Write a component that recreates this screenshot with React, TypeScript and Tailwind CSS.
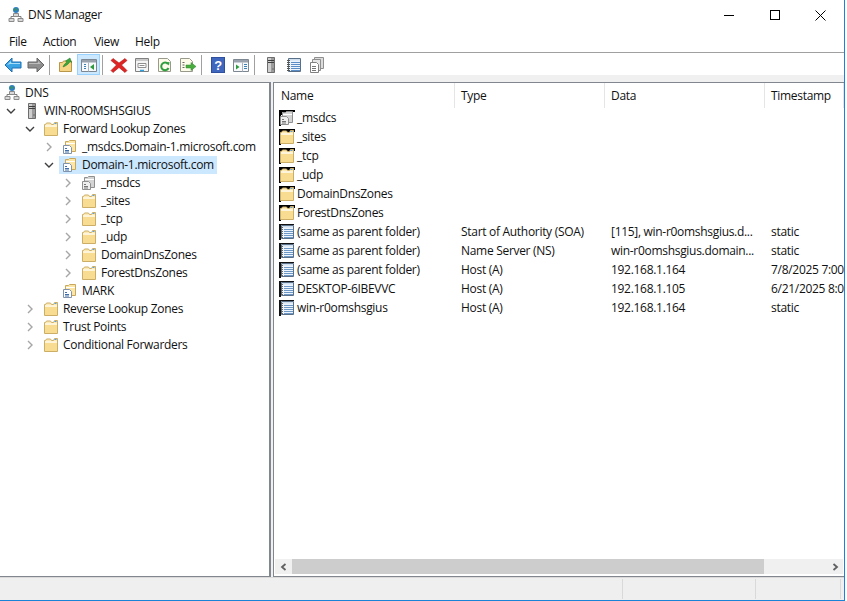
const font = "font-['Open_Sans',sans-serif] text-[12px] tracking-[-0.3px] text-[#111111]"

const FolderIcon = ({ shadow }: { shadow?: boolean }) => (
  <svg width="16" height="16" viewBox="0 0 16 16" className="shrink-0">
    {shadow && <path d="M0 0h16v3H2v13H0z" fill="#000" />}
    <path d="M1.500 14.500V3.500h1l1-1.500h4l1 1.500h2l1-2h3v13z" fill="#fbeab6" stroke="#cdae66" />
    <path d="M2 5h12" stroke="#fff" />
    <path d="M2 6h12v8H2z" fill="#f8dc92" />
    <path d="M11.500 2.500h2" stroke="#5aa0e0" />
  </svg>
)

const ZoneIcon = ({ gray, shadow }: { gray?: boolean; shadow?: boolean }) => {
  const line = gray ? '#8f8f8f' : '#c8a85e'
  const fill = gray ? '#d4d4d4' : '#fbe6a8'
  const ink = gray ? '#777' : '#3d6fae'
  return (
    <svg width="16" height="16" viewBox="0 0 16 16" className="shrink-0">
      {shadow && <path d="M0 0h16v2H3v3H2v11H0z" fill="#000" />}
      <path d="M3.500 12.500V2.500h3l1-1h6v11z" fill={fill} stroke={line} />
      <path d="M4 4.500h9" stroke="#fff" />
      <path d="M1.500 6.500h6l2 2v6h-8z" fill={gray ? '#efefef' : '#fff'} stroke={gray ? '#8f8f8f' : '#7f93ad'} />
      <path d="M3 9.500h2M3 11.500h4M3 13h4" stroke={ink} />
    </svg>
  )
}

const ServerIcon = ({ w = 16 }: { w?: number }) => (
  <svg width={w} height="16" viewBox="0 0 16 16" className="shrink-0">
    <path d="M4.500 0.500h7v15h-7z" fill="#9c9c9c" stroke="#6d6d6d" />
    <path d="M5 1h3v14H5z" fill="#cfcfcf" />
    <path d="M5 3.500h6M5 5.500h6" stroke="#3f3f3f" />
    <path d="M9.500 12h1" stroke="#3f3f3f" />
  </svg>
)

const DnsIcon = () => (
  <svg width="16" height="16" viewBox="0 0 16 16" className="shrink-0">
    <circle cx="8" cy="3" r="3" fill="#2f7fc0" />
    <path d="M6.500 1.500l2 0 .5 1.500-2 1z" fill="#3d9b3d" />
    <path d="M8 6v3M3 11V9.500h10V11" fill="none" stroke="#7d7d7d" />
    <path d="M5.500 6.500h5v3h-5zM1 11.500h5v3H1zM10 11.500h5v3h-5z" fill="#d9d9d9" stroke="#8a8a8a" />
  </svg>
)

const RecordIcon = () => (
  <svg width="16" height="16" viewBox="0 0 16 16" className="shrink-0">
    <path d="M0 0h2v16H0zM0 0h15v1H0z" fill="#111" />
    <path d="M2.500 1.500h12v13h-12z" fill="#eef4fb" stroke="#5a6f88" />
    <path d="M3 2h11v1.500H3z" fill="#cfdff0" />
    <path d="M5 5.500h9M5 7.500h9M5 9.500h9M5 11.500h9M5 13.500h9" stroke="#6d97c4" />
    <path d="M2 3.500h2M2 5.500h2M2 7.500h2M2 9.500h2M2 11.500h2M2 13.500h2" stroke="#666" />
  </svg>
)

const Chevron = ({ open }: { open?: boolean }) => (
  <svg width="10" height="10" viewBox="0 0 10 10" className="shrink-0">
    {open ? (
      <path d="M1 3l4 4 4-4" fill="none" stroke="#3f3f3f" strokeWidth="1.400" />
    ) : (
      <path d="M3 1l4 4-4 4" fill="none" stroke="#a6a6a6" strokeWidth="1.400" />
    )}
  </svg>
)

const treeRows = [
  { level: 1, open: true, icon: 'server', label: 'WIN-R0OMSHSGIUS' },
  { level: 2, open: true, icon: 'folder', label: 'Forward Lookup Zones' },
  { level: 3, icon: 'zone', label: '_msdcs.Domain-1.microsoft.com' },
  { level: 3, open: true, icon: 'zone', label: 'Domain-1.microsoft.com', selected: true },
  { level: 4, icon: 'gray', label: '_msdcs' },
  { level: 4, icon: 'folder', label: '_sites' },
  { level: 4, icon: 'folder', label: '_tcp' },
  { level: 4, icon: 'folder', label: '_udp' },
  { level: 4, icon: 'folder', label: 'DomainDnsZones' },
  { level: 4, icon: 'folder', label: 'ForestDnsZones' },
  { level: 3, leaf: true, icon: 'zone', label: 'MARK' },
  { level: 2, icon: 'folder', label: 'Reverse Lookup Zones' },
  { level: 2, icon: 'folder', label: 'Trust Points' },
  { level: 2, icon: 'folder', label: 'Conditional Forwarders' },
]

const listRows = [
  { icon: 'gray', name: '_msdcs' },
  { icon: 'folder', name: '_sites' },
  { icon: 'folder', name: '_tcp' },
  { icon: 'folder', name: '_udp' },
  { icon: 'folder', name: 'DomainDnsZones' },
  { icon: 'folder', name: 'ForestDnsZones' },
  { icon: 'record', name: '(same as parent folder)', type: 'Start of Authority (SOA)', data: '[115], win-r0omshsgius.d...', time: 'static' },
  { icon: 'record', name: '(same as parent folder)', type: 'Name Server (NS)', data: 'win-r0omshsgius.domain...', time: 'static' },
  { icon: 'record', name: '(same as parent folder)', type: 'Host (A)', data: '192.168.1.164', time: '7/8/2025 7:00:00 AM' },
  { icon: 'record', name: 'DESKTOP-6IBEVVC', type: 'Host (A)', data: '192.168.1.105', time: '6/21/2025 8:00:00 AM' },
  { icon: 'record', name: 'win-r0omshsgius', type: 'Host (A)', data: '192.168.1.164', time: 'static' },
]

const ToolSep = () => (
  <div className="w-[7px] h-full shrink-0 flex items-center pl-[2px] pt-px">
    <div className="w-px h-[20px] bg-[#a0a0a0]" />
  </div>
)

const ToolBtn = ({ active, children }: { active?: boolean; children: React.ReactNode }) => (
  <div
    className={`w-[23px] h-[21px] mt-px shrink-0 flex items-center justify-center border ${
      active ? 'bg-[#cce8ff] border-[#99d1ff]' : 'border-transparent'
    }`}
  >
    {children}
  </div>
)

const Svg = ({ w = 18, children }: { w?: number; children: React.ReactNode }) => (
  <svg width={w} height="16" viewBox={`0 0 ${w} 16`}>
    {children}
  </svg>
)

const DocShape = () => (
  <path d="M1.500 1.500h9l3 3v10h-12z" fill="#fdfbea" stroke="#9a9a8c" />
)

const Toolbar = () => (
  <div className="h-[22px] flex items-center pl-px bg-white">
    <ToolBtn>
      <Svg>
        <path d="M1 8l7-7v4h9v6H8v4z" fill="#3aa3e3" stroke="#1c6fb5" />
        <path d="M3 8l4-4v2h9v1H6z" fill="#a8dcf7" />
      </Svg>
    </ToolBtn>
    <ToolBtn>
      <Svg>
        <path d="M17 8l-7-7v4H1v6h9v4z" fill="#8e8e8e" stroke="#666" />
        <path d="M2 6h9V4l3 3H2z" fill="#bdbdbd" />
      </Svg>
    </ToolBtn>
    <ToolSep />
    <ToolBtn>
      <Svg w={16}>
        <path d="M1.500 14.500V5.500h3l1-1.500h8v10.500z" fill="#f6d684" stroke="#b8964a" />
        <path d="M5 10c1-3 3-4 4-5L7.500 4 12 1l1.500 4.500-1.500-1c-1 2-3 4-7 5.500z" fill="#3aa63a" stroke="#22752a" strokeWidth="0.500" />
      </Svg>
    </ToolBtn>
    <ToolBtn active>
      <Svg>
        <path d="M1.500 2.500h15v12h-15z" fill="#f7f9fb" stroke="#7d8791" />
        <path d="M2 3h14v2.500H2z" fill="#9aa3ad" />
        <path d="M4 7.500h2M4 9.500h2M4 11.500h2" stroke="#3a7fb5" />
        <path d="M8.500 5.500v9" stroke="#a9b3bd" />
        <path d="M14 7v6l-4-3z" fill="#2e9a3e" />
      </Svg>
    </ToolBtn>
    <ToolSep />
    <ToolBtn>
      <Svg>
        <path d="M3 1.500l6 4.500 6-4.500 2 2L11.500 8l5.500 5.500-2 2L9 10.500l-6 5-2-2L6.500 8 1 3.500z" fill="#e02424" stroke="#a81818" strokeWidth="0.600" />
      </Svg>
    </ToolBtn>
    <ToolBtn>
      <Svg w={16}>
        <path d="M1.500 1.500h13v13h-13z" fill="#f5f5f5" stroke="#808080" />
        <path d="M2 2h12v2H2z" fill="#c9c9c9" />
        <path d="M4 6.500h8v4H4z" fill="#fff" stroke="#8f8f8f" />
        <path d="M5.500 8.500h5" stroke="#8f8f8f" />
        <path d="M6 13.500h4" stroke="#2f9fe0" strokeWidth="1.500" />
      </Svg>
    </ToolBtn>
    <ToolBtn>
      <Svg w={16}>
        <DocShape />
        <path d="M11 7a3.800 3.800 0 1 0 .5 4" fill="none" stroke="#2f9e3f" strokeWidth="2" />
        <path d="M9 5.500l3.500-.5-.5 3.500z" fill="#2f9e3f" />
      </Svg>
    </ToolBtn>
    <ToolBtn>
      <Svg>
        <DocShape />
        <path d="M3.500 5.500h2M3.500 8h2M3.500 10.500h2" stroke="#666" />
        <path d="M7 8h5V5.500l5 4-5 4V11H7z" fill="#49ad3f" stroke="#2d8529" strokeWidth="0.500" />
      </Svg>
    </ToolBtn>
    <ToolSep />
    <ToolBtn>
      <svg width="14" height="16" viewBox="0 0 14 16">
        <path d="M0 0h14v16H0z" fill="#2f4f9f" />
        <path d="M1 1h12v14H1z" fill="#3e67bd" />
        <text x="7" y="13" textAnchor="middle" fontFamily="Liberation Sans, sans-serif" fontWeight="700" fontSize="13" fill="#fff">
          ?
        </text>
      </svg>
    </ToolBtn>
    <ToolBtn>
      <Svg w={16}>
        <path d="M.5 2.500h15v12H.5z" fill="#f7f9fb" stroke="#7d8791" />
        <path d="M1 3h14v2.500H1z" fill="#9aa3ad" />
        <path d="M3 7.500v5l3.500-2.500z" fill="#2e9a3e" />
        <path d="M9.500 5.500v9" stroke="#a9b3bd" />
        <path d="M11 7.500h3M11 9.500h3M11 11.500h3" stroke="#3a7fb5" />
      </Svg>
    </ToolBtn>
    <ToolSep />
    <ToolBtn>
      <ServerIcon w={16} />
    </ToolBtn>
    <ToolBtn>
      <Svg w={16}>
        <path d="M2.500 1.500h12v13h-12z" fill="#eef4fb" stroke="#5a6f88" />
        <path d="M3 2h11v1.500H3z" fill="#cfdff0" />
        <path d="M5 5.500h9M5 7.500h9M5 9.500h9M5 11.500h9M5 13.500h9" stroke="#5b8ec6" />
        <path d="M1 3.500h3M1 5.500h3M1 7.500h3M1 9.500h3M1 11.500h3M1 13.500h3" stroke="#555" />
      </Svg>
    </ToolBtn>
    <ToolBtn>
      <Svg w={16}>
        <path d="M5.500 .5h9v11h-9z" fill="#dcdcdc" stroke="#8f8f8f" />
        <path d="M3.500 2.500h8v11h-8z" fill="#e6e6e6" stroke="#8f8f8f" />
        <path d="M1.500 5.500h6l2 2v8h-8z" fill="#fff" stroke="#808080" />
        <path d="M3 9.500h4M3 11.500h4M3 13.500h4" stroke="#777" />
      </Svg>
    </ToolBtn>
  </div>
)

const iconFor = (icon: string, shadow = false) => {
  if (icon === 'server') return <ServerIcon />
  if (icon === 'zone') return <ZoneIcon shadow={shadow} />
  if (icon === 'gray') return <ZoneIcon gray shadow={shadow} />
  if (icon === 'record') return <RecordIcon />
  return <FolderIcon shadow={shadow} />
}

const levelPad: Record<number, string> = {
  1: 'pl-[6px]',
  2: 'pl-[25px]',
  3: 'pl-[44px]',
  4: 'pl-[63px]',
}

const TreePanel = () => (
  <div className="w-[271px] shrink-0 bg-white border-t border-b border-r-2 border-[#82878f] overflow-hidden">
    <div className="h-[18px] flex items-center pl-[4px] mt-px gap-[5px] whitespace-nowrap">
      <DnsIcon />
      <span>DNS</span>
    </div>
    {treeRows.map(row => (
      <div key={row.label + row.level} className={`h-[18px] flex items-center whitespace-nowrap ${levelPad[row.level]}`}>
        <div className="w-[10px] shrink-0 flex">{!row.leaf && <Chevron open={row.open} />}</div>
        <div className={`flex items-center h-full ml-[5px] pr-[3px] pl-[3px] ${row.selected ? 'bg-[#cce8ff]' : ''}`}>
          {iconFor(row.icon)}
          <span className="ml-[4px]">{row.label}</span>
        </div>
      </div>
    ))}
  </div>
)

const headers = ['Name', 'Type', 'Data', 'Timestamp']

const ListPanel = () => (
  <div className="flex-1 min-w-0 ml-[2px] bg-white border-t border-b border-l border-[#82878f] flex flex-col overflow-hidden">
    <div className="h-[25px] shrink-0 grid grid-cols-[181px_150px_160px_1fr] whitespace-nowrap">
      {headers.map((h, i) => (
        <div key={h} className={`flex items-center border-r border-[#e5e5e5] ${i === 0 ? 'pl-[7px]' : 'pl-[6px]'}`}>
          {h}
        </div>
      ))}
    </div>
    <div className="flex-1 min-h-0 overflow-hidden">
      {listRows.map((row, i) => (
        <div key={i} className="h-[19px] grid grid-cols-[181px_150px_160px_1fr] items-center whitespace-nowrap overflow-hidden">
          <div className="flex items-center pl-[5px] gap-[2px]">
            {iconFor(row.icon, true)}
            <span>{row.name}</span>
          </div>
          <div className="pl-[6px] overflow-hidden">{row.type}</div>
          <div className="pl-[6px] overflow-hidden">{row.data}</div>
          <div className="pl-[6px] overflow-hidden">{row.time}</div>
        </div>
      ))}
    </div>
    <div className="h-[15px] mb-[2px] mx-px shrink-0 flex bg-[#f0f0f0]">
      <div className="w-[17px] flex items-center justify-center">
        <svg width="8" height="8" viewBox="0 0 8 8">
          <path d="M5.500 1L2 4l3.500 3" fill="none" stroke="#606060" strokeWidth="1.800" />
        </svg>
      </div>
      <div className="w-[472px] bg-[#cdcdcd]" />
      <div className="flex-1" />
      <div className="w-[17px] flex items-center justify-center">
        <svg width="8" height="8" viewBox="0 0 8 8">
          <path d="M2.500 1L6 4 2.500 7" fill="none" stroke="#606060" strokeWidth="1.800" />
        </svg>
      </div>
    </div>
  </div>
)

const App = () => (
  <div className={`w-[847px] h-[601px] bg-white overflow-hidden ${font}`}>
    <div className="w-[845px] h-[601px] border-r border-b border-[#1883d7] flex flex-col">
      {/* Title bar */}
      <div className="h-[30px] shrink-0 flex items-center pl-[10px]">
        <div className="w-[12px] flex justify-center">
          <DnsIcon />
        </div>
        <span className="ml-[6px]">DNS Manager</span>
        <div className="ml-auto flex items-center h-full">
          <div className="w-[46px] flex justify-center">
            <div className="w-[10px] h-px bg-black" />
          </div>
          <div className="w-[46px] flex justify-center">
            <div className="w-[10px] h-[10px] border border-black" />
          </div>
          <div className="w-[46px] flex justify-center pr-[2px]">
            <svg width="11" height="11" viewBox="0 0 11 11">
              <path d="M.5 .5l10 10M10.500 .5l-10 10" stroke="#000" strokeWidth="1" />
            </svg>
          </div>
        </div>
      </div>
      {/* Menu */}
      <div className="h-[23px] shrink-0 flex items-center pb-px border-b border-[#a0a0a0] pl-[9px] pt-[2px]">
        <span className="w-[34px]">File</span>
        <span className="w-[51px]">Action</span>
        <span className="w-[41px]">View</span>
        <span>Help</span>
      </div>
      <Toolbar />
      <div className="h-[7px] shrink-0 bg-[#f0f0f0]" />
      <div className="h-[495px] shrink-0 flex bg-[#f0f0f0]">
        <TreePanel />
        <ListPanel />
      </div>
      {/* Status bar */}
      <div className="flex-1 flex bg-[#efefef] border-t border-[#dadada] pt-px pb-px">
        <div className="w-[623px] border-r border-[#d9d9d9]" />
        <div className="w-[133px] border-r border-[#d9d9d9]" />
        <div className="w-[85px] border-r border-[#d9d9d9]" />
      </div>
    </div>
  </div>
)

export default App
